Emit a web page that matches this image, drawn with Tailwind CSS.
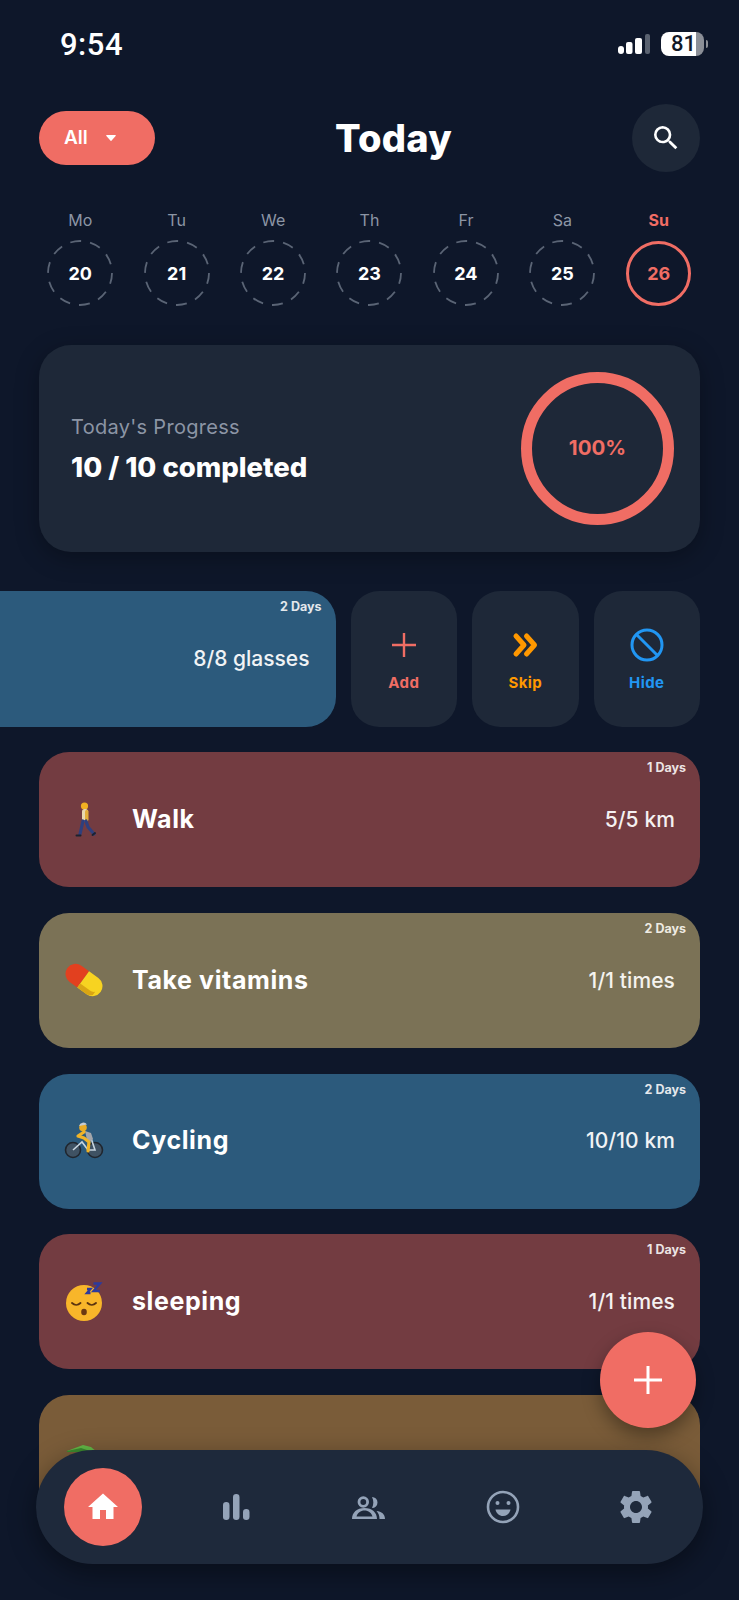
<!DOCTYPE html>
<html lang="en">
<head>
    <meta charset="UTF-8">
    <title>Today</title>
    <script src="https://cdn.jsdelivr.net/npm/@tailwindcss/browser@4"></script>
</head>
<body class="bg-[#0e172a]">
<div class="relative w-[739px] h-[1600px] overflow-hidden bg-[#0e172a] text-white font-['Inter','Open_Sans',sans-serif]">

    <!-- Status bar -->
    <div class="flex items-center justify-between h-[24px] mt-[32px] pl-[60px] pr-[31px] pt-0">
        <span class="mt-[2px] font-['Roboto',sans-serif] text-[31px] leading-[24px] font-medium tracking-[0.5px]">9:54</span>
        <div class="flex items-center gap-[11px]">
            <svg width="32" height="20" viewBox="0 0 32 20">
                <rect x="0" y="12" width="6" height="8" rx="3" fill="#fff"/>
                <rect x="8" y="8" width="6.5" height="12" rx="2" fill="#fff"/>
                <rect x="17" y="4" width="7" height="16" rx="2" fill="#fff"/>
                <rect x="27" y="0" width="5" height="20" rx="2" fill="#5a6270"/>
            </svg>
            <div class="flex items-center gap-[2px]">
                <div class="flex w-[43px] h-[24px]">
                    <div class="w-[35px] rounded-l-[8px] bg-white text-[#111827] font-['Roboto',sans-serif] text-[22px] leading-[24px] font-medium text-right">81</div>
                    <div class="flex-1 rounded-r-[8px] bg-[#8b8f97]"></div>
                </div>
                <div class="w-[2px] h-[8px] rounded-r-full bg-[#8b8f97]"></div>
            </div>
        </div>
    </div>

    <!-- Header -->
    <div class="flex items-center justify-between h-[68px] mt-[48px] px-[39px]">
        <button class="flex items-center justify-start gap-[18px] w-[116px] h-[54px] pl-[25px] rounded-full bg-[#f06d64] font-semibold text-[19px]">
            All
            <svg width="10" height="6" viewBox="0 0 10 6"><path d="M.8 0h8.400a.6.6 0 0 1 .45 1L5.400 5.700a.6.6 0 0 1-.8 0L.35 1A.6.6 0 0 1 .8 0z" fill="#fff"/></svg>
        </button>
        <h1 class="text-[38px] font-extrabold tracking-[0.3px]">Today</h1>
        <button class="flex items-center justify-center w-[68px] h-[68px] rounded-full bg-[#1e2838]">
            <svg width="32" height="32" viewBox="0 0 24 24" fill="#fff"><path d="M15.5 14h-.79l-.28-.27A6.47 6.47 0 0 0 16 9.5 6.5 6.5 0 1 0 9.5 16c1.61 0 3.09-.59 4.23-1.57l.27.28v.79l5 4.99L20.49 19l-4.99-5zm-6 0C7.01 14 5 11.99 5 9.5S7.01 5 9.5 5 14 7.01 14 9.5 11.99 14 9.5 14z"/></svg>
        </button>
    </div>

    <!-- Week strip -->
    <div class="grid grid-cols-7 px-[32px] mt-[36px]">
        <div class="flex flex-col items-center">
            <span class="h-[24px] leading-[24px] text-[16px] text-[#8c95a5]">Mo</span>
            <div class="relative flex items-center justify-center w-[66px] h-[66px] mt-[8px]">
                <svg class="absolute inset-0" width="66" height="66" viewBox="0 0 66 66"><circle cx="33" cy="33" r="32" fill="none" stroke="#5a6475" stroke-width="1.8" stroke-dasharray="11 9.1"/></svg>
                <span class="text-[18px] font-bold">20</span>
            </div>
        </div>
        <div class="flex flex-col items-center">
            <span class="h-[24px] leading-[24px] text-[16px] text-[#8c95a5]">Tu</span>
            <div class="relative flex items-center justify-center w-[66px] h-[66px] mt-[8px]">
                <svg class="absolute inset-0" width="66" height="66" viewBox="0 0 66 66"><circle cx="33" cy="33" r="32" fill="none" stroke="#5a6475" stroke-width="1.8" stroke-dasharray="11 9.1"/></svg>
                <span class="text-[18px] font-bold">21</span>
            </div>
        </div>
        <div class="flex flex-col items-center">
            <span class="h-[24px] leading-[24px] text-[16px] text-[#8c95a5]">We</span>
            <div class="relative flex items-center justify-center w-[66px] h-[66px] mt-[8px]">
                <svg class="absolute inset-0" width="66" height="66" viewBox="0 0 66 66"><circle cx="33" cy="33" r="32" fill="none" stroke="#5a6475" stroke-width="1.8" stroke-dasharray="11 9.1"/></svg>
                <span class="text-[18px] font-bold">22</span>
            </div>
        </div>
        <div class="flex flex-col items-center">
            <span class="h-[24px] leading-[24px] text-[16px] text-[#8c95a5]">Th</span>
            <div class="relative flex items-center justify-center w-[66px] h-[66px] mt-[8px]">
                <svg class="absolute inset-0" width="66" height="66" viewBox="0 0 66 66"><circle cx="33" cy="33" r="32" fill="none" stroke="#5a6475" stroke-width="1.8" stroke-dasharray="11 9.1"/></svg>
                <span class="text-[18px] font-bold">23</span>
            </div>
        </div>
        <div class="flex flex-col items-center">
            <span class="h-[24px] leading-[24px] text-[16px] text-[#8c95a5]">Fr</span>
            <div class="relative flex items-center justify-center w-[66px] h-[66px] mt-[8px]">
                <svg class="absolute inset-0" width="66" height="66" viewBox="0 0 66 66"><circle cx="33" cy="33" r="32" fill="none" stroke="#5a6475" stroke-width="1.8" stroke-dasharray="11 9.1"/></svg>
                <span class="text-[18px] font-bold">24</span>
            </div>
        </div>
        <div class="flex flex-col items-center">
            <span class="h-[24px] leading-[24px] text-[16px] text-[#8c95a5]">Sa</span>
            <div class="relative flex items-center justify-center w-[66px] h-[66px] mt-[8px]">
                <svg class="absolute inset-0" width="66" height="66" viewBox="0 0 66 66"><circle cx="33" cy="33" r="32" fill="none" stroke="#5a6475" stroke-width="1.8" stroke-dasharray="11 9.1"/></svg>
                <span class="text-[18px] font-bold">25</span>
            </div>
        </div>
        <div class="flex flex-col items-center">
            <span class="h-[24px] leading-[24px] text-[16px] font-bold text-[#f06d64]">Su</span>
            <div class="flex items-center justify-center w-[65px] h-[65px] mt-[9px] rounded-full border-[3px] border-[#f06d64]">
                <span class="text-[18px] font-bold text-[#f06d64]">26</span>
            </div>
        </div>
    </div>

    <!-- Progress card -->
    <div class="flex items-center justify-between h-[207px] mx-[39px] mt-[39px] pl-[32px] pr-[26px] rounded-[32px] bg-[#1e2838] shadow-[0_6px_24px_rgba(0,0,0,0.3)]">
        <div>
            <p class="h-[28px] leading-[28px] text-[20px] text-[#8c95a5] tracking-[0.3px]">Today's Progress</p>
            <p class="h-[36px] leading-[36px] mt-[8px] text-[27.5px] font-extrabold">10 / 10 completed</p>
        </div>
        <div class="relative flex items-center justify-center w-[153px] h-[153px]">
            <svg class="absolute inset-0" width="153" height="153" viewBox="0 0 153 153"><circle cx="76.5" cy="76.5" r="71" fill="none" stroke="#f06d64" stroke-width="11"/></svg>
            <span class="text-[20.5px] font-bold text-[#f06d64]">100%</span>
        </div>
    </div>

    <!-- Swiped row with actions -->
    <div class="flex h-[136px] mt-[39px] -ml-[40px] pr-[39px] gap-[15px]">
        <div class="relative flex items-center justify-end w-[375.5px] pr-[26px] rounded-[30px] bg-[#2c5a7c]">
            <span class="absolute top-[8px] right-[14px] text-[12.5px] leading-[16px] font-bold text-[#e4e8ec]">2 Days</span>
            <span class="text-[21px] font-medium text-[#f1f3f5]">8/8 glasses</span>
        </div>
        <div class="flex flex-col items-center w-[106.5px] pt-[36px] rounded-[28px] bg-[#1e2838]">
            <svg width="36" height="36" viewBox="0 0 36 36"><path d="M18 6v24M6 18h24" stroke="#f06d64" stroke-width="2.4"/></svg>
            <span class="h-[18px] leading-[18px] mt-[11px] text-[15px] tracking-[0.4px] font-bold text-[#f06d64]">Add</span>
        </div>
        <div class="flex flex-col items-center w-[106.5px] pt-[36px] rounded-[28px] bg-[#1e2838]">
            <svg width="36" height="36" viewBox="0 0 36 36" fill="none" stroke="#ff9800" stroke-width="5" stroke-linecap="round" stroke-linejoin="round"><path d="M9 9l8 9-8 9M19.5 9l8 9-8 9"/></svg>
            <span class="h-[18px] leading-[18px] mt-[11px] text-[15px] tracking-[0.4px] font-bold text-[#ff9800]">Skip</span>
        </div>
        <div class="flex flex-col items-center w-[106.5px] pt-[36px] rounded-[28px] bg-[#1e2838]">
            <svg width="36" height="36" viewBox="0 0 36 36" fill="none" stroke="#2196f3" stroke-width="3"><circle cx="18" cy="18" r="15"/><path d="M7.5 7.5l21 21"/></svg>
            <span class="h-[18px] leading-[18px] mt-[11px] text-[15px] tracking-[0.4px] font-bold text-[#2196f3]">Hide</span>
        </div>
    </div>

    <!-- Habit list -->
    <div class="flex flex-col gap-[25.75px] mt-[25px] mx-[39px]">
        <div class="relative flex items-center h-[135px] pl-[25px] pr-[25px] rounded-[30px] bg-[#733c41]">
            <span class="absolute top-[8px] right-[14px] text-[12.5px] leading-[16px] font-bold text-[#ece4e4]">1 Days</span>
            <svg class="w-[40px] shrink-0" width="40" height="40" viewBox="0 0 40 40">
                <circle cx="20.500" cy="6" r="3.600" fill="#f2b122"/>
                <rect x="18" y="9" width="6" height="13" rx="2.500" fill="#e8d8b0"/>
                <rect x="21" y="10" width="3.500" height="11" rx="1.500" fill="#e2ad3c"/>
                <path d="M19 21l-3 13M22 21l2 6 6 7" fill="none" stroke="#2f3f7d" stroke-width="3.200" stroke-linecap="round" stroke-linejoin="round"/>
                <path d="M12.500 35.500h4M28.500 35l2.500-2" stroke="#1b2230" stroke-width="2" stroke-linecap="round"/>
            </svg>
            <span class="ml-[28px] text-[25px] tracking-[0.6px] font-bold">Walk</span>
            <span class="ml-auto text-[21px] tracking-[0.1px] font-medium text-[#f5f1f1]">5/5 km</span>
        </div>
        <div class="relative flex items-center h-[135px] pl-[25px] pr-[25px] rounded-[30px] bg-[#7b7256]">
            <span class="absolute top-[8px] right-[14px] text-[12.5px] leading-[16px] font-bold text-[#eeebe2]">2 Days</span>
            <svg class="w-[40px] shrink-0" width="40" height="40" viewBox="0 0 40 40">
                <g transform="rotate(36 20 20)">
                    <path d="M19 10H9.500a10 10 0 0 0 0 20H19z" fill="#e2401f"/>
                    <path d="M19 10h11.500a10 10 0 0 1 0 20H19z" fill="#f7d321"/>
                    <path d="M19 25h12a6 6 0 0 0 5-2v4a9 9 0 0 1-5.500 3H19z" fill="#d9a514"/>
                </g>
            </svg>
            <span class="ml-[28px] text-[25px] tracking-[0.6px] font-bold">Take vitamins</span>
            <span class="ml-auto text-[21px] tracking-[0.1px] font-medium text-[#f5f3ee]">1/1 times</span>
        </div>
        <div class="relative flex items-center h-[135px] pl-[25px] pr-[25px] rounded-[30px] bg-[#2c5a7c]">
            <span class="absolute top-[8px] right-[14px] text-[12.5px] leading-[16px] font-bold text-[#e4e8ec]">2 Days</span>
            <svg class="w-[40px] shrink-0" width="40" height="40" viewBox="0 0 40 40">
                <circle cx="9" cy="29" r="7.500" fill="#3f5263" stroke="#20262e" stroke-width="1.600"/>
                <circle cx="31" cy="29" r="7.500" fill="#3f5263" stroke="#20262e" stroke-width="1.600"/>
                <path d="M9 29l9-8 6 8 7 0-4-12" fill="none" stroke="#c8d5df" stroke-width="1.600"/>
                <circle cx="19" cy="6.500" r="3.800" fill="#e9ac26"/>
                <path d="M15 5a4.500 4.500 0 0 1 8-1.500z" fill="#c6ccd2"/>
                <path d="M21 10l6 2 2 6-3 3-3-2z" fill="#a3a6ab"/>
                <path d="M20 11l-6 4 6 2 5 4-1 9" fill="none" stroke="#f0b428" stroke-width="3.200" stroke-linecap="round" stroke-linejoin="round"/>
            </svg>
            <span class="ml-[28px] text-[25px] tracking-[0.6px] font-bold">Cycling</span>
            <span class="ml-auto text-[21px] tracking-[0.1px] font-medium text-[#f1f3f5]">10/10 km</span>
        </div>
        <div class="relative flex items-center h-[135px] pl-[25px] pr-[25px] rounded-[30px] bg-[#733c41]">
            <span class="absolute top-[8px] right-[14px] text-[12.5px] leading-[16px] font-bold text-[#ece4e4]">1 Days</span>
            <svg class="w-[40px] shrink-0" width="40" height="40" viewBox="0 0 40 40">
                <circle cx="20" cy="21" r="18" fill="#f8b62a"/>
                <path d="M8 21c2.500 2.500 6 2.500 8.500 0M23.500 21c2.500 2.500 6 2.500 8.500 0" fill="none" stroke="#5b3410" stroke-width="1.800" stroke-linecap="round"/>
                <ellipse cx="20" cy="30" rx="2.800" ry="3.200" fill="#6b3a12"/>
                <path d="M23 7h3.500L23 11h3.500M29.500 1.500h6.500L29.500 9H36" fill="none" stroke="#2d3a9c" stroke-width="2.400"/>
            </svg>
            <span class="ml-[28px] text-[25px] tracking-[0.6px] font-bold">sleeping</span>
            <span class="ml-auto text-[21px] tracking-[0.1px] font-medium text-[#f5f1f1]">1/1 times</span>
        </div>
        <div class="flex items-start h-[135px] pl-[28px] pt-[49px] rounded-[30px] bg-[#7a5c39]">
            <svg width="30" height="8" viewBox="0 0 30 8"><path d="M0 7L16 1l8 2 6 5H0z" fill="#62b846"/><path d="M0 7l14-3 12 4H0z" fill="#3c8a2f"/></svg>
        </div>
    </div>

    <!-- Floating add button -->
    <button class="absolute left-[600px] top-[1332px] flex items-center justify-center w-[96px] h-[96px] rounded-full bg-[#f06d64] shadow-[0_8px_18px_rgba(0,0,0,0.35)]">
        <svg width="30" height="30" viewBox="0 0 30 30"><path d="M15 1v28M1 15h28" stroke="#fff" stroke-width="3"/></svg>
    </button>

    <!-- Bottom nav -->
    <nav class="absolute left-[36px] top-[1450px] grid grid-cols-5 items-center justify-items-center w-[667px] h-[114px] rounded-[57px] bg-[#1e293b] shadow-[0_8px_28px_rgba(0,0,0,0.4)]">
        <div class="flex items-center justify-center w-[78px] h-[78px] rounded-full bg-[#f06d64]">
            <svg width="36" height="36" viewBox="0 0 24 24" fill="#fff"><path d="M10 20v-6h4v6h5v-8h3L12 3 2 12h3v8z"/></svg>
        </div>
        <svg width="40" height="40" viewBox="0 0 40 40" fill="#94a3b8">
            <rect x="7" y="15" width="6.500" height="18" rx="3.200"/>
            <rect x="17" y="7" width="6.500" height="26" rx="3.200"/>
            <rect x="27" y="22" width="6.500" height="11" rx="3.200"/>
        </svg>
        <svg width="40" height="40" viewBox="0 0 40 40" fill="#94a3b8">
            <circle cx="14.300" cy="15" r="4.300" fill="none" stroke="#94a3b8" stroke-width="2.800"/>
            <path d="M23 10a5.500 5.500 0 0 1 0 11c1.800-3.400 1.800-7.600 0-11z"/>
            <path d="M3 32c0-6.500 5-11 12.500-11S28 25.500 28 32z M7.500 29.500h16c-1-3.500-4-6-8-6s-7 2.500-8 6z" fill-rule="evenodd"/>
            <path d="M27.500 24c5 .5 8.500 3 8.500 8h-5.500c0-3.200-1-5.800-3-8z"/>
        </svg>
        <svg width="36" height="36" viewBox="0 0 36 36">
            <circle cx="18" cy="18" r="15" fill="none" stroke="#94a3b8" stroke-width="2.600"/>
            <circle cx="12.500" cy="14" r="2" fill="#94a3b8"/>
            <circle cx="23.500" cy="14" r="2" fill="#94a3b8"/>
            <path d="M10.500 20.500h15c-.8 4-3.800 6.500-7.500 6.500s-6.700-2.500-7.500-6.500z" fill="#94a3b8"/>
        </svg>
        <svg width="40" height="40" viewBox="0 0 24 24" fill="#94a3b8"><path d="M19.140 12.940c.04-.3.060-.61.060-.94 0-.32-.02-.64-.07-.94l2.030-1.580c.18-.14.23-.41.120-.61l-1.920-3.320c-.12-.22-.37-.29-.59-.22l-2.390.96c-.5-.38-1.030-.7-1.620-.94l-.36-2.540c-.04-.24-.24-.41-.48-.41h-3.840c-.24 0-.43.17-.47.41l-.36 2.540c-.59.24-1.130.57-1.620.94l-2.390-.96c-.22-.08-.47 0-.59.22L2.740 8.870c-.12.21-.08.47.12.61l2.030 1.580c-.05.3-.09.63-.09.94s.02.64.07.94l-2.030 1.580c-.18.14-.23.41-.12.61l1.920 3.320c.12.22.37.29.59.22l2.390-.96c.5.38 1.030.7 1.620.94l.36 2.540c.05.24.24.41.48.41h3.840c.24 0 .44-.17.47-.41l.36-2.540c.59-.24 1.130-.56 1.620-.94l2.390.96c.22.08.47 0 .59-.22l1.920-3.320c.12-.22.07-.47-.12-.61l-2.010-1.580zM12 15.600c-1.980 0-3.600-1.620-3.600-3.600s1.620-3.600 3.600-3.600 3.600 1.620 3.600 3.600-1.620 3.600-3.600 3.600z"/></svg>
    </nav>
</div>
</body>
</html>
